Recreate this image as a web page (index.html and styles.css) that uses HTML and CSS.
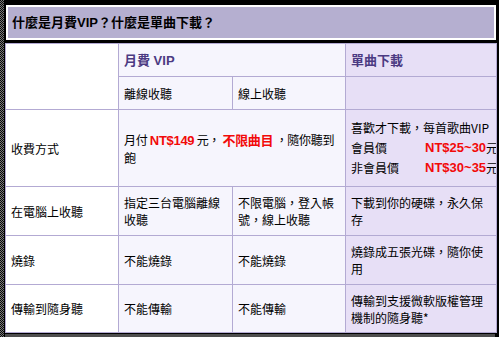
FILE: index.html
```html
<!DOCTYPE html>
<html lang="zh-Hant">
<head>
<meta charset="utf-8">
<link rel="stylesheet" href="styles.css">
</head>
<body>
<div class="page">
  <div class="title">什麼是月費VIP？什麼是單曲下載？</div>
  <table class="cmp">
    <colgroup>
      <col class="c1"><col class="c2"><col class="c3"><col class="c4">
    </colgroup>
    <tr class="r-h1">
      <td class="w" rowspan="2"></td>
      <td class="v head" colspan="2">月費 VIP</td>
      <td class="d head">單曲下載</td>
    </tr>
    <tr class="r-h2">
      <td class="v">離線收聽</td>
      <td class="v">線上收聽</td>
      <td class="d"></td>
    </tr>
    <tr class="r-fee">
      <td class="w">收費方式</td>
      <td class="v fee" colspan="2">月付 <b class="red">NT$149</b> 元， <b class="red">不限曲目</b> ，隨你聽到飽</td>
      <td class="d clip">
        <div class="line">喜歡才下載，每首歌曲VIP</div>
        <div class="line price"><span class="lbl">會員價</span><b class="red amt">NT$25~30</b> 元</div>
        <div class="line price"><span class="lbl">非會員價</span><b class="red amt">NT$30~35</b> 元</div>
      </td>
    </tr>
    <tr class="r-a">
      <td class="w">在電腦上收聽</td>
      <td class="v">指定三台電腦離線收聽</td>
      <td class="v">不限電腦，登入帳號，線上收聽</td>
      <td class="d">下載到你的硬碟，永久保存</td>
    </tr>
    <tr class="r-a">
      <td class="w">燒錄</td>
      <td class="v">不能燒錄</td>
      <td class="v">不能燒錄</td>
      <td class="d">燒錄成五張光碟，隨你使用</td>
    </tr>
    <tr class="r-b">
      <td class="w">傳輸到隨身聽</td>
      <td class="v">不能傳輸</td>
      <td class="v">不能傳輸</td>
      <td class="d">傳輸到支援微軟版權管理機制的隨身聽*</td>
    </tr>
  </table>
  <div class="bottom"></div>
</div>
</body>
</html>
```
FILE: styles.css
```css
html, body {
  margin: 0;
  padding: 0;
  background: #000;
  height: 100%;
}
body {
  font-family: "Noto Sans CJK TC", "Liberation Sans", sans-serif;
  font-size: 12px;
  color: #000;
  overflow: hidden;
}
.page {
  padding: 5px 4px 0 5px;
  position: relative;
  min-height: 337px;
  box-sizing: border-box;
}
.page::before {
  content: "";
  position: absolute;
  left: 0;
  top: 0;
  bottom: 0;
  width: 4px;
  background: repeating-conic-gradient(#777 0 25%, #0a0a0a 0 50%) 0 0 / 2px 2px;
}
.title {
  box-sizing: border-box;
  height: 35px;
  margin-left: 1px;
  width: 490px;
  border: 2px solid #fff;
  background: #b5afd0;
  font-family: "Liberation Sans", "Noto Sans CJK TC", sans-serif;
  font-weight: bold;
  font-size: 13px;
  line-height: 31px;
  padding-left: 4px;
  color: #000;
}
.cmp {
  margin-top: 3px;
  border-collapse: collapse;
  table-layout: fixed;
  width: 491px;
  border: 1px solid #b3aad3;
}
.c1 { width: 113px; }
.c2 { width: 114px; }
.c3 { width: 113px; }
.c4 { width: 151px; }
.cmp td {
  border: 1px solid #b3aad3;
  padding: 0 5px;
  line-height: 17px;
  vertical-align: middle;
}
.r-h1 td { height: 32px; }
.r-h2 td { height: 32px; }
.r-fee td { height: 76px; }
.r-a td { height: 48px; }
.r-b td { height: 47px; }
.w { background: #fff; }
.v { background: #f6f5fd; }
.d { background: #e7dff6; }
.cmp td.fee {
  padding-right: 1px;
  letter-spacing: -0.3px;
}
.head {
  font-family: "Liberation Sans", "Noto Sans CJK TC", sans-serif;
  font-weight: bold;
  font-size: 13px;
  color: #4b3a82;
}
.red {
  color: #f20a0a;
  font-family: "Liberation Sans", "Noto Sans CJK TC", sans-serif;
  font-weight: bold;
  font-size: 13px;
}
.clip {
  overflow: hidden;
  white-space: nowrap;
}
.line {
  line-height: 20px;
}
.price {
  display: flex;
  width: 160px;
}
.lbl {
  width: 74px;
}
.amt {
  width: 58px;
  text-align: right;
  margin-right: 3px;
}
.bottom {
  height: 4px;
  margin-top: 1px;
  background: #4e4e4e;
}
```
